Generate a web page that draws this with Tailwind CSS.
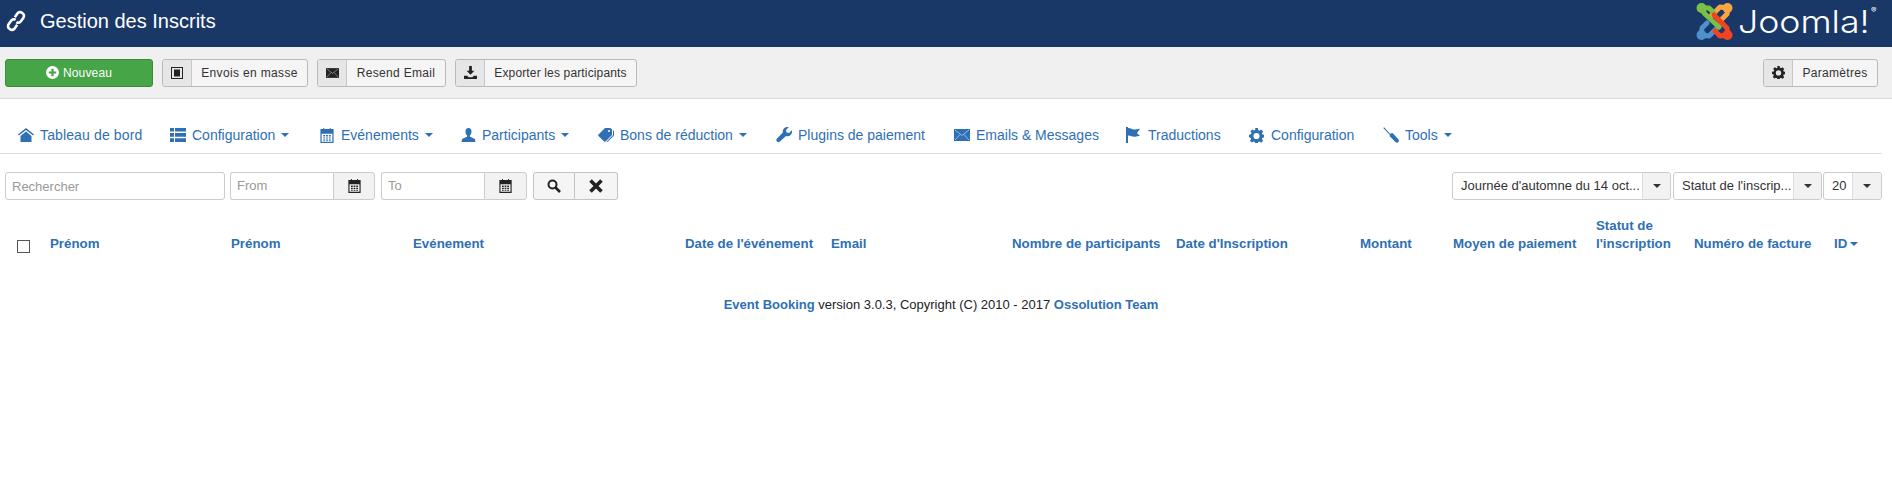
<!DOCTYPE html>
<html lang="fr">
<head>
<meta charset="UTF-8" />
<title>Gestion des Inscrits</title>
<script src="https://cdn.jsdelivr.net/npm/@tailwindcss/browser@4"></script>
</head>
<body class="bg-white font-['Liberation_Sans',Arial,sans-serif] text-[#333]">
<svg class="hidden">
  <symbol id="cog" viewBox="0 0 16 16"><path fill-rule="evenodd" d="M6.600 0h2.800l.4 2.200 1.300.6L13 1.600l2 2-1.200 1.900.6 1.300 2.100.5v2.800l-2.200.4-.5 1.300 1.200 1.900-2 2-1.900-1.200-1.300.5-.4 2.200H6.600l-.4-2.200-1.300-.5L3 15.500l-2-2 1.200-1.900-.6-1.300L0 9.900V7.100l2.200-.4.5-1.300L1.500 3.500l2-2 1.900 1.200 1.300-.6zM8 5.200a3.300 3.300 0 1 0 0 6.600 3.300 3.300 0 0 0 0-6.600z"/></symbol>
  <symbol id="cal" viewBox="0 0 14 16"><path fill-rule="evenodd" d="M0 1h3V0h1v1h6V0h1v1h3v15H0zm1.300 5v8.700h11.400V6zM3 7.500h2V9H3zm3 0h2V9H6zm3 0h2V9H9zM3 10h2v1.300H3zm3 0h2v1.300H6zm3 0h2v1.300H9zm-6 2.200h2v1.300H3zm3 0h2v1.300H6zm3 0h2v1.300H9z"/></symbol>
  <symbol id="mail" viewBox="0 0 16 12"><path d="M0 0h16v12H0z"/><path d="M1 1l7 5.500L15 1M1 11l5-5.500M15 11l-5-5.500" fill="none" stroke="#fff" stroke-opacity=".55" stroke-width=".9"/></symbol>
</svg>

<header class="h-[47px] bg-[#1a3867] flex items-center justify-between pl-[5px] pr-[15px] pb-[5px]">
  <div class="flex items-center">
    <svg class="w-[22px] h-[22px] text-white" viewBox="0 0 22 22" fill="none" stroke="currentColor" stroke-width="2.600"><path d="M9.800 7.300l2.600-3.800a3.200 3.200 0 0 1 4.500-.8l.7.500a3.200 3.200 0 0 1 .8 4.500l-2.500 3.600a3.200 3.200 0 0 1-4.500.8"/><path d="M12.200 14.700l-2.600 3.800a3.200 3.200 0 0 1-4.500.8l-.7-.5a3.200 3.200 0 0 1-.8-4.500l2.500-3.600a3.200 3.200 0 0 1 4.500-.8"/></svg>
    <h1 class="ml-[13px] text-[20px] font-normal text-white">Gestion des Inscrits</h1>
  </div>
  <div class="flex items-center">
    <svg class="w-[37px] h-[37px]" viewBox="0 0 37 37" fill="none" stroke-width="5" stroke-linecap="round" stroke-linejoin="round">
      <path d="M5 32 L13 33 L24 22" stroke="#5091cd"/>
      <path d="M5 32 L6 25 L11 20" stroke="#5091cd"/>
      <circle cx="5.500" cy="32" r="5" fill="#5091cd"/>
      <path d="M32 5 L24 4 L14 14" stroke="#f9a541"/>
      <path d="M32 5 L31 11 L26 16" stroke="#f9a541"/>
      <circle cx="31.500" cy="5" r="5" fill="#f9a541"/>
      <path d="M5 5 L9 11 L23 24" stroke="#7ac143"/>
      <path d="M5 5 L13 5 L18 10" stroke="#7ac143"/>
      <circle cx="5.500" cy="5" r="5" fill="#7ac143"/>
      <path d="M32 32 L31 25 L18 12" stroke="#f44321"/>
      <path d="M32 32 L24 33 L19 28" stroke="#f44321"/>
      <circle cx="31.500" cy="32" r="5" fill="#f44321"/>
    </svg>
    <span class="ml-[5px] mr-[25px] relative origin-left scale-x-[1.15] text-white text-[31px] leading-none font-['Inter'] font-light">Joomla!<sup class="absolute right-[-6px] top-[1px] text-[7px] font-normal leading-none">®</sup></span>
  </div>
</header>

<div class="h-[52px] bg-[#f0f0f0] border-b border-[#ddd] flex items-center px-[5px] pr-[14px] text-[12px]">
  <button class="w-[148px] h-[28px] rounded-[3px] bg-[#46a546] border border-[#3c8c3c] text-white flex items-center justify-center gap-[4px] tracking-[0.15px]">
    <svg class="w-[13px] h-[13px]" viewBox="0 0 14 14"><path fill="#fff" d="M7 0a7 7 0 1 0 0 14A7 7 0 0 0 7 0zm-1.200 3h2.400v2.800H11v2.400H8.200V11H5.800V8.200H3V5.800h2.800z"/></svg>
    Nouveau
  </button>
  <button class="ml-[9px] h-[28px] w-[146px] rounded-[3px] bg-[#f5f5f5] border border-[#b9b9b9] flex items-center">
    <span class="w-[29px] h-full bg-[#e6e6e6] border-r border-[#c8c8c8] rounded-l-[3px] flex items-center justify-center">
      <svg class="w-[12px] h-[12px]" viewBox="0 0 12 12"><path fill="#222" fill-rule="evenodd" d="M0 0h12v12H0zm1 1v10h10V1z"/><path fill="#222" d="M3 2.500h6v7H3z"/></svg>
    </span>
    <span class="flex-1 text-center tracking-[0.35px]">Envois en masse</span>
  </button>
  <button class="ml-[9px] h-[28px] w-[129px] rounded-[3px] bg-[#f5f5f5] border border-[#b9b9b9] flex items-center">
    <span class="w-[29px] h-full bg-[#e6e6e6] border-r border-[#c8c8c8] rounded-l-[3px] flex items-center justify-center">
      <svg class="w-[13px] h-[10px] text-[#222] fill-current"><use href="#mail"/></svg>
    </span>
    <span class="flex-1 text-center tracking-[0.3px]">Resend Email</span>
  </button>
  <button class="ml-[9px] h-[28px] w-[182px] rounded-[3px] bg-[#f5f5f5] border border-[#b9b9b9] flex items-center">
    <span class="w-[29px] h-full bg-[#e6e6e6] border-r border-[#c8c8c8] rounded-l-[3px] flex items-center justify-center">
      <svg class="w-[13px] h-[13px]" viewBox="0 0 14 14"><path fill="#222" d="M5.500 0h3v5h2.700L7 9.500 2.800 5h2.700zM0 10.500h3.500L5 12h4l1.500-1.500H14V14H0z"/></svg>
    </span>
    <span class="flex-1 text-center tracking-[0.15px]">Exporter les participants</span>
  </button>
  <button class="ml-auto h-[28px] w-[115px] rounded-[3px] bg-[#f5f5f5] border border-[#b9b9b9] flex items-center">
    <span class="w-[29px] h-full bg-[#e6e6e6] border-r border-[#c8c8c8] rounded-l-[3px] flex items-center justify-center">
      <svg class="w-[13px] h-[13px] fill-[#222]"><use href="#cog"/></svg>
    </span>
    <span class="flex-1 text-center tracking-[0.3px]">Paramètres</span>
  </button>
</div>

<nav class="mr-[10px] h-[55px] border-b border-[#ddd] flex items-center pl-[18px] pt-[19px] pb-[1px] text-[14px] text-[#2f70b4] whitespace-nowrap">
  <a class="w-[152px] flex items-center gap-[6px] tracking-[0.13px]">
    <svg class="w-[16px] h-[14px] fill-[#2f70b4]" viewBox="0 0 16 14"><path d="M8 0l8 6.500-.9 1.100L8 2 .9 7.600 0 6.500zM8 3.500l5.500 4.400V14H2.500V7.900z"/></svg>
    Tableau de bord
  </a>
  <a class="w-[149px] flex items-center gap-[6px]">
    <svg class="w-[16px] h-[14px] fill-[#2f70b4]" viewBox="0 0 16 14"><path d="M0 0h4v3.500H0zm5 0h11v3.500H5zM0 5h4v3.800H0zm5 0h11v3.800H5zm-5 5.300h4V14H0zm5 0h11V14H5z"/></svg>
    Configuration
    <i class="w-0 h-0 border-x-[4px] border-x-transparent border-t-[4px] border-t-[#2f70b4]"></i>
  </a>
  <a class="w-[142px] flex items-center gap-[6px]">
    <svg class="w-[16px] h-[15px] fill-[#2f70b4]"><use href="#cal"/></svg>
    Evénements
    <i class="w-0 h-0 border-x-[4px] border-x-transparent border-t-[4px] border-t-[#2f70b4]"></i>
  </a>
  <a class="w-[137px] flex items-center gap-[6px]">
    <svg class="w-[15px] h-[14px] fill-[#2f70b4]" viewBox="0 0 15 14"><path d="M7.500 0C9.500 0 10.700 1.600 10.500 4c-.1 1.500-.9 3-1.600 3.600v1.200c1.700.7 4.300 1.500 5 2.400.4.600.5 1.800.5 2.800H.6c0-1 .1-2.200.5-2.800.7-.9 3.300-1.700 5-2.400V7.600C5.400 7 4.600 5.500 4.500 4 4.300 1.600 5.500 0 7.500 0z"/></svg>
    Participants
    <i class="w-0 h-0 border-x-[4px] border-x-transparent border-t-[4px] border-t-[#2f70b4]"></i>
  </a>
  <a class="w-[178px] flex items-center gap-[6px]">
    <svg class="w-[16px] h-[14px] fill-[#2f70b4]" viewBox="0 0 16 14"><path fill-rule="evenodd" d="M7 0h5.500L14 1.500V7l-6.500 6.500a1 1 0 0 1-1.400 0L.5 8a1 1 0 0 1 0-1.400zm4 2a1 1 0 1 0 0 2 1 1 0 0 0 0-2z"/><path d="M15 2l1 1v4.500L9.500 14l-1-.3L15 7z"/></svg>
    Bons de réduction
    <i class="w-0 h-0 border-x-[4px] border-x-transparent border-t-[4px] border-t-[#2f70b4]"></i>
  </a>
  <a class="w-[178px] flex items-center gap-[6px]">
    <svg class="w-[16px] h-[16px] fill-[#2f70b4]" viewBox="0 0 16 16"><path d="M15.800 3.300l-2.700 2.600-2.600-.5-.5-2.500L12.700.2a4.500 4.500 0 0 0-5.800 5.400L1 11.600a2 2 0 0 0 2.900 2.900l6.100-5.600a4.500 4.500 0 0 0 5.800-5.600z"/></svg>
    Plugins de paiement
  </a>
  <a class="w-[171px] flex items-center gap-[6px]">
    <svg class="w-[16px] h-[12px] fill-[#2f70b4]"><use href="#mail"/></svg>
    Emails &amp; Messages
  </a>
  <a class="w-[124px] flex items-center gap-[7px]">
    <svg class="w-[16px] h-[16px] fill-[#2f70b4]" viewBox="0 0 16 16"><path d="M1 0h2v16H1zM3 1c3 0 4 1.500 6 1.500 2 0 4-1 6-.8L12 6l3 3c-3-.5-4 .8-6 .8-2 0-3-1.300-6-1.300z"/></svg>
    Traductions
  </a>
  <a class="w-[134px] flex items-center gap-[7px]">
    <svg class="w-[15px] h-[15px] fill-[#2f70b4]"><use href="#cog"/></svg>
    Configuration
  </a>
  <a class="flex items-center gap-[6px]">
    <svg class="w-[16px] h-[16px] fill-[#2f70b4]" viewBox="0 0 16 16"><path d="M.3 1.100l.8-.8L7.600 7.300 7 8z"/><path d="M7.500 6.500l2-.5 6 6.500a2 2 0 0 1-2.800 2.800L6.500 9z"/></svg>
    Tools
    <i class="w-0 h-0 border-x-[4px] border-x-transparent border-t-[4px] border-t-[#2f70b4]"></i>
  </a>
</nav>

<form class="mt-[18px] mr-[10px] flex items-center pl-[5px] text-[13px] h-[28px]">
  <input class="w-[220px] h-[28px] px-[6px] border border-[#ccc] rounded-[3px] placeholder:text-[#999]" placeholder="Rechercher" />
  <div class="ml-[5px] flex h-[28px]">
    <input class="w-[103px] px-[6px] border border-[#ccc] border-r-0 rounded-l-[3px] placeholder:text-[#999]" placeholder="From" />
    <span class="w-[42px] bg-[#f2f2f2] border border-[#ccc] rounded-r-[3px] flex items-center justify-center"><svg class="w-[13px] h-[14px] fill-[#222]"><use href="#cal"/></svg></span>
  </div>
  <div class="ml-[6px] flex h-[28px]">
    <input class="w-[103px] px-[6px] border border-[#ccc] border-r-0 rounded-l-[3px] placeholder:text-[#999]" placeholder="To" />
    <span class="w-[43px] bg-[#f2f2f2] border border-[#ccc] rounded-r-[3px] flex items-center justify-center"><svg class="w-[13px] h-[14px] fill-[#222]"><use href="#cal"/></svg></span>
  </div>
  <div class="ml-[6px] flex h-[28px]">
    <span class="w-[42px] bg-[#f5f5f5] border border-[#c4c4c4] rounded-l-[3px] flex items-center justify-center">
      <svg class="w-[14px] h-[14px]" viewBox="0 0 14 14" fill="none" stroke="#222" stroke-width="2"><circle cx="5.500" cy="5.500" r="4"/><path d="M8.500 8.500l4.500 4.500" stroke-width="2.600"/></svg>
    </span>
    <span class="w-[43px] bg-[#f5f5f5] border border-l-0 border-[#c4c4c4] rounded-r-[3px] flex items-center justify-center">
      <svg class="w-[14px] h-[14px]" viewBox="0 0 14 14" fill="none" stroke="#222" stroke-width="3.600"><path d="M1.500 1.500l11 11M12.500 1.500l-11 11"/></svg>
    </span>
  </div>
  <div class="ml-auto flex text-[#333]">
    <div class="w-[219px] h-[28px] border border-[#ccc] rounded-[3px] flex items-center">
      <span class="flex-1 pl-[8px] whitespace-nowrap">Journée d'automne du 14 oct...</span>
      <span class="w-[28px] shrink-0 h-full bg-[#f2f2f2] border-l border-[#ddd] rounded-r-[3px] flex items-center justify-center"><i class="w-0 h-0 border-x-[4px] border-x-transparent border-t-[4px] border-t-[#333]"></i></span>
    </div>
    <div class="ml-[2px] w-[149px] h-[28px] border border-[#ccc] rounded-[3px] flex items-center">
      <span class="flex-1 pl-[8px] whitespace-nowrap">Statut de l'inscrip...</span>
      <span class="w-[28px] shrink-0 h-full bg-[#f2f2f2] border-l border-[#ddd] rounded-r-[3px] flex items-center justify-center"><i class="w-0 h-0 border-x-[4px] border-x-transparent border-t-[4px] border-t-[#333]"></i></span>
    </div>
    <div class="ml-[1px] w-[59px] h-[28px] border border-[#ccc] rounded-[3px] flex items-center">
      <span class="flex-1 pl-[8px]">20</span>
      <span class="w-[29px] shrink-0 h-full bg-[#f2f2f2] border-l border-[#ddd] rounded-r-[3px] flex items-center justify-center"><i class="w-0 h-0 border-x-[4px] border-x-transparent border-t-[4px] border-t-[#333]"></i></span>
    </div>
  </div>
</form>

<table class="mt-[17px] w-[1882px] table-fixed text-[13.3px] font-bold text-[#2f70b4] leading-[18px]">
  <thead>
    <tr class="align-bottom text-left">
      <th class="w-[42px] pl-[17px] pb-[8px]"><span class="block w-[13px] h-[13px] border border-[#555] bg-white"></span></th>
      <th class="w-[181px] px-[8px] pb-[8px]">Prénom</th>
      <th class="w-[182px] px-[8px] pb-[8px]">Prénom</th>
      <th class="w-[272px] px-[8px] pb-[8px]">Evénement</th>
      <th class="w-[146px] px-[8px] pb-[8px]">Date de l'événement</th>
      <th class="w-[181px] px-[8px] pb-[8px]">Email</th>
      <th class="w-[164px] pl-[8px] pb-[8px] whitespace-nowrap">Nombre de participants</th>
      <th class="w-[184px] px-[8px] pb-[8px]">Date d'Inscription</th>
      <th class="w-[93px] px-[8px] pb-[8px]">Montant</th>
      <th class="w-[143px] px-[8px] pb-[8px]">Moyen de paiement</th>
      <th class="w-[98px] px-[8px] pb-[8px]">Statut de l'inscription</th>
      <th class="w-[140px] px-[8px] pb-[8px]">Numéro de facture</th>
      <th class="px-[8px] pb-[8px]"><span class="flex items-center gap-[3px]">ID <i class="w-0 h-0 border-x-[4px] border-x-transparent border-t-[4px] border-t-[#2f70b4]"></i></span></th>
    </tr>
  </thead>
</table>

<p class="mt-[35px] w-[1882px] text-center text-[13px] leading-[18px] text-[#222]"><a class="font-bold text-[#2f70b4]">Event Booking</a> version 3.0.3, Copyright (C) 2010 - 2017 <a class="font-bold text-[#2f70b4]">Ossolution Team</a></p>
</body>
</html>
